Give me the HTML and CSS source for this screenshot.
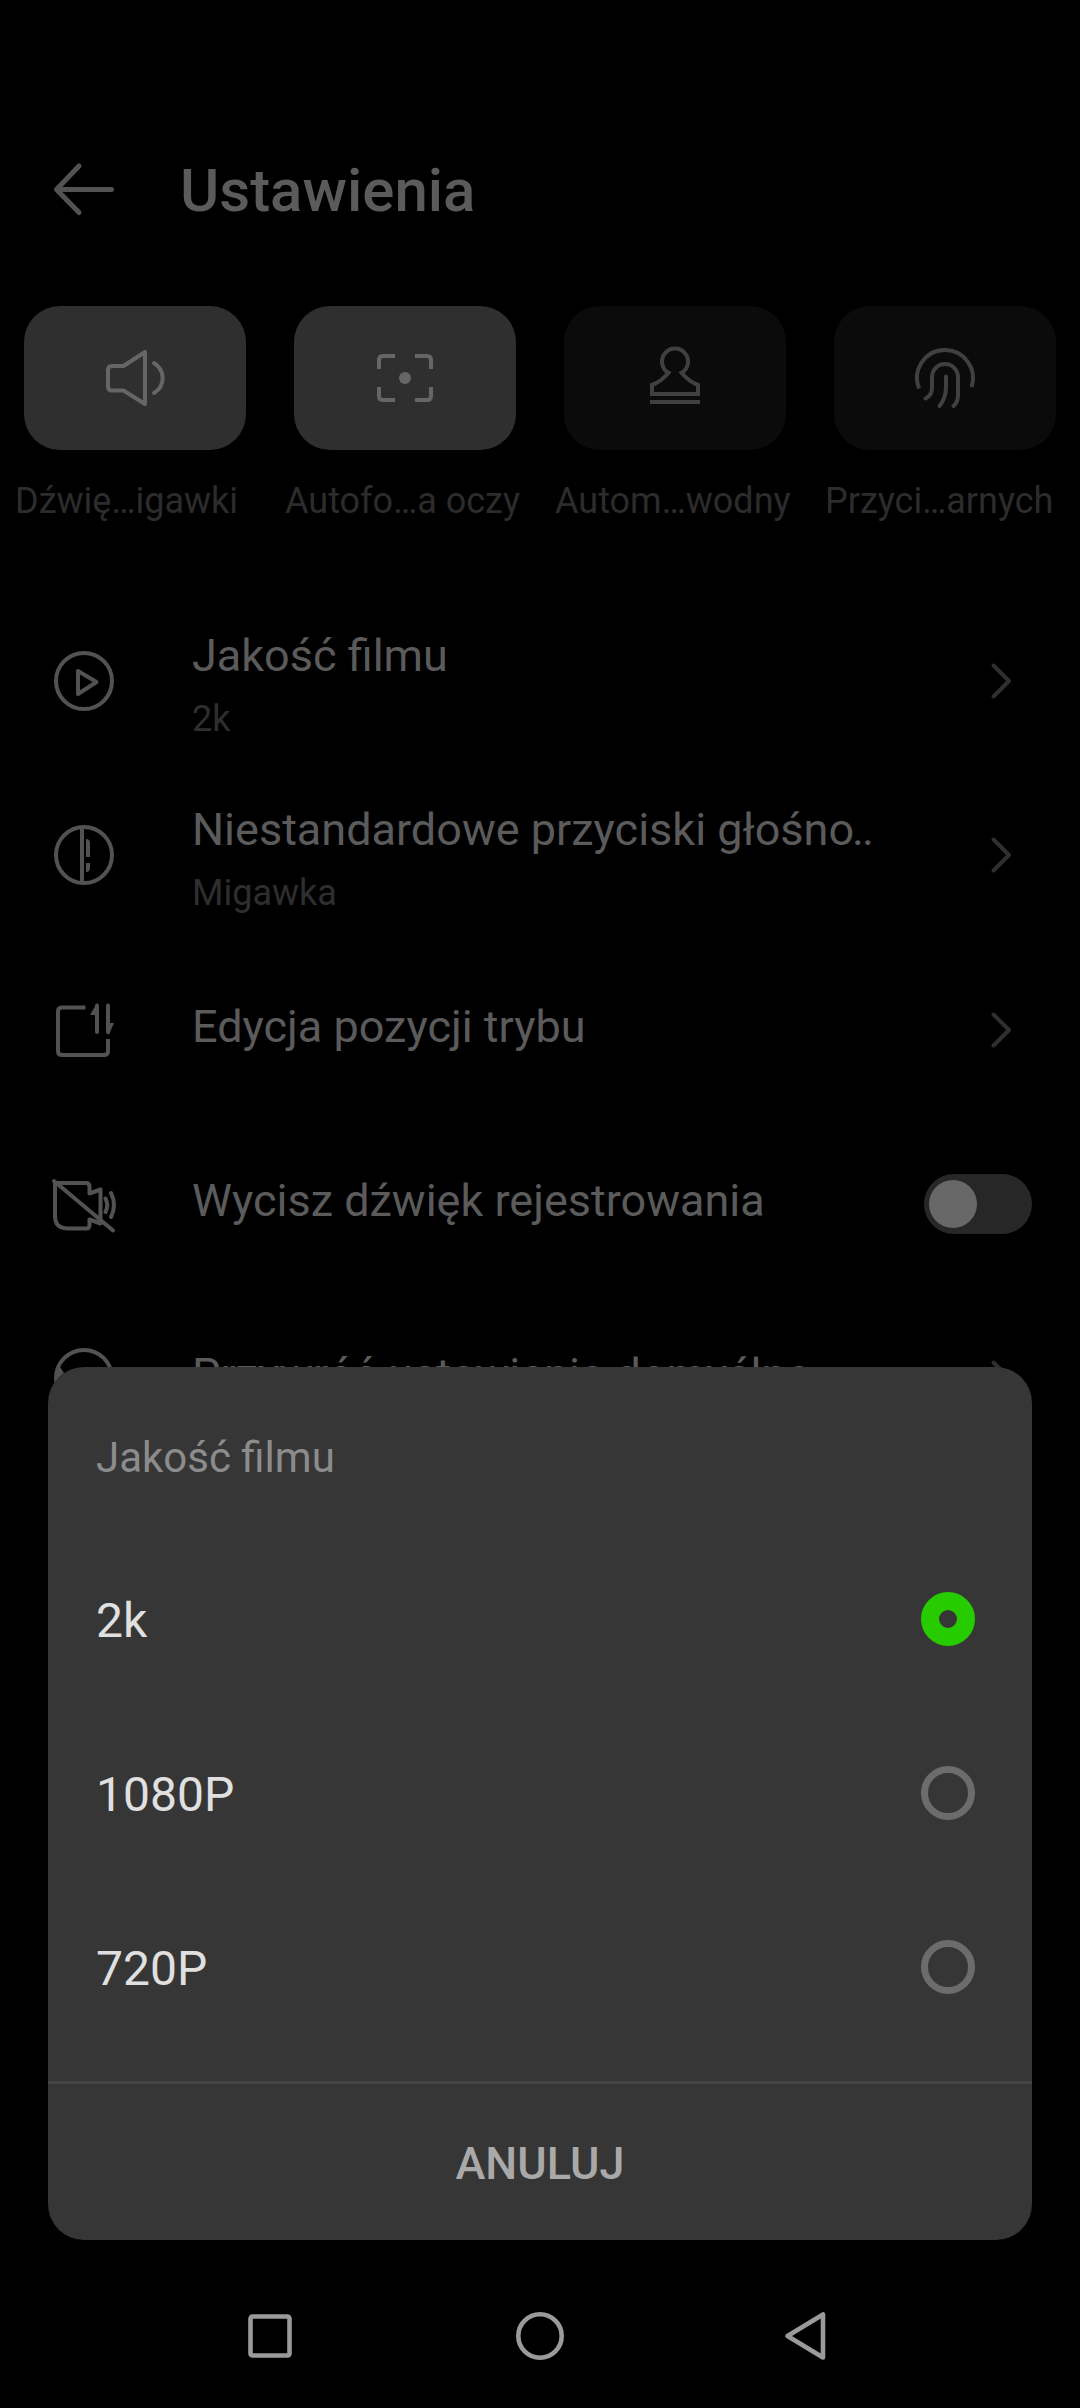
FILE: index.html
```html
<!DOCTYPE html>
<html lang="pl">
<head>
<meta charset="utf-8">
<title>Ustawienia</title>
<link rel="stylesheet" href="styles.css">
</head>
<body>
<main class="screen">
  <header class="topbar">
    <svg class="icon back" viewBox="0 0 60 60"><path d="M57.500 29.500H3M25 6L2.500 29.500L25 52.500"/></svg>
    <h1 class="title">Ustawienia</h1>
  </header>

  <section class="tiles">
    <div class="tile">
      <div class="tile-face tile-on">
        <svg class="icon" viewBox="0 0 60 60"><path d="M40 4V56L18.500 42.500H7Q3 42.500 3 38.500V22Q3 18 7 18H18.500ZM49 15C60.500 22 60.500 38 49 45"/></svg>
      </div>
      <span class="tile-label">Dźwię…igawki</span>
    </div>
    <div class="tile">
      <div class="tile-face tile-on">
        <svg class="icon" viewBox="0 0 60 60"><path class="butt" d="M4 21V12Q4 8 8 8H20M40 8H52Q56 8 56 12V21M56 39V48Q56 52 52 52H40M20 52H8Q4 52 4 48V39"/><circle class="solid" cx="30" cy="30" r="6"/></svg>
      </div>
      <span class="tile-label">Autofo…a oczy</span>
    </div>
    <div class="tile">
      <div class="tile-face">
        <svg class="icon" viewBox="0 0 60 60"><path class="butt" d="M7 46V37C14 34.500 20 29 23.500 24.800A13 13 0 1 1 36.500 24.800C40 29 46 34.500 53 37V46ZM5 54H55"/></svg>
      </div>
      <span class="tile-label">Autom…wodny</span>
    </div>
    <div class="tile">
      <div class="tile-face">
        <svg class="icon" viewBox="0 0 60 60"><path class="butt" d="M4 40.500A28 28 0 1 1 56.500 39"/><path d="M10.500 50.500Q17 47.500 17 40V29A13 13 0 0 1 43 29V47Q43 54 38.500 58M31 28.500V39Q31 50 24.500 58"/></svg>
      </div>
      <span class="tile-label">Przyci…arnych</span>
    </div>
  </section>

  <section class="list">
    <div class="row">
      <svg class="icon" viewBox="0 0 60 60"><circle cx="30" cy="30" r="28"/><path d="M24 20V43L42.500 31Z"/></svg>
      <div class="row-text two-line"><span class="row-title">Jakość filmu</span><span class="row-sub">2k</span></div>
      <svg class="chevron" viewBox="0 0 20 36"><path d="M2.500 2.500L18 18L2.500 33.500"/></svg>
    </div>
    <div class="row">
      <svg class="icon" viewBox="0 0 60 60"><circle cx="30" cy="30" r="28"/><path class="butt" d="M28 2V58"/><path class="solid" d="M32 14Q36 14 36 18V32H32ZM32 38H36V43Q36 47 32 47Z"/></svg>
      <div class="row-text two-line"><span class="row-title">Niestandardowe przyciski głośn<span class="tight">o..</span></span><span class="row-sub">Migawka</span></div>
      <svg class="chevron" viewBox="0 0 20 36"><path d="M2.500 2.500L18 18L2.500 33.500"/></svg>
    </div>
    <div class="row">
      <svg class="icon" viewBox="0 0 60 60"><path class="butt" d="M31.500 8.500H8Q4 8.500 4 12.500V52Q4 56 8 56H50Q54 56 54 52V40"/><path d="M43 6.500V33M54 6.500V33"/><path class="solid" d="M43 4L36.500 15V16H43ZM54 24H60L55 35.500H54Z"/></svg>
      <div class="row-text"><span class="row-title">Edycja pozycji trybu</span></div>
      <svg class="chevron low" viewBox="0 0 20 36"><path d="M2.500 2.500L18 18L2.500 33.500"/></svg>
    </div>
    <div class="row">
      <svg class="icon" viewBox="0 0 60 60"><path d="M1 10H32Q35.500 10 35.500 13.500V20.500L46.500 16.500V50.500L35.500 46.500V52Q35.500 55.500 32 55.500H14Q1 55.500 1 43ZM0 8L59 57.500M51.500 25.500Q55 32 51.500 39M57 20Q63 32 57 44"/></svg>
      <div class="row-text"><span class="row-title">Wycisz dźwięk rejestrowania</span></div>
      <span class="toggle"><span class="knob"></span></span>
    </div>
    <div class="row">
      <svg class="icon" viewBox="0 0 60 60"><circle cx="30" cy="31" r="28"/><path class="solid" d="M4 17L10 26L1 34Z"/></svg>
      <div class="row-text"><span class="row-title">Przywróć ustawienia domyślne</span></div>
      <svg class="chevron low" viewBox="0 0 20 36"><path d="M2.500 2.500L18 18L2.500 33.500"/></svg>
    </div>
  </section>

  <section class="sheet" role="dialog">
    <h2 class="sheet-title">Jakość filmu</h2>
    <div class="option"><span class="option-name">2k</span><span class="radio checked"></span></div>
    <div class="option"><span class="option-name">1080P</span><span class="radio"></span></div>
    <div class="option"><span class="option-name">720P</span><span class="radio"></span></div>
    <div class="cancel">ANULUJ</div>
  </section>

  <nav class="navbar">
    <svg viewBox="0 0 60 60"><rect x="10.500" y="10.500" width="39" height="39" rx="2"/></svg>
    <svg viewBox="0 0 60 60"><circle cx="30" cy="30" r="21.700"/></svg>
    <svg viewBox="0 0 60 60"><path d="M43 8.500V51.500L7.500 30Z"/></svg>
  </nav>
</main>
</body>
</html>
```
FILE: styles.css
```css
* { box-sizing: border-box; }

body {
  margin: 0;
  background: #000;
  font-family: Roboto, sans-serif;
}

.screen {
  position: relative;
  width: 1080px;
  height: 2408px;
  overflow: hidden;
  background: #000;
}

svg {
  display: block;
  flex: none;
  overflow: visible;
  fill: none;
  stroke-linecap: round;
  stroke-linejoin: round;
}

.icon { width: 60px; height: 60px; stroke: #525252; stroke-width: 4; }
.butt { stroke-linecap: butt; stroke-linejoin: miter; }
.solid { stroke: none; fill: #525252; }

.topbar {
  display: flex;
  align-items: center;
  gap: 66px;
  height: 306px;
  padding: 74px 54px 0;
}
.back { stroke-width: 5; }
.title {
  margin: 0;
  padding-top: 2px;
  color: #5b5b5b;
  font-size: 60px;
  font-weight: 500;
  line-height: 72px;
}

.tiles { display: grid; grid-template-columns: repeat(4, 270px); }
.tile-face {
  display: grid;
  place-items: center;
  width: 222px;
  height: 144px;
  margin-left: 24px;
  border-radius: 36px;
  background: #0b0b0b;
}
.tile-face .icon { stroke: #404040; }
.tile-on { background: #2f2f2f; }
.tile-face.tile-on .icon { stroke: #666; }
.tile-face .icon .solid { stroke: none; fill: #666; }
.tile-label {
  display: block;
  margin-top: 30px;
  padding-left: 15px;
  color: #2c2c2c;
  font-size: 36px;
  line-height: 42px;
  white-space: nowrap;
}

.list { padding-top: 72px; }
.row {
  display: flex;
  align-items: center;
  height: 174px;
  padding: 0 48px 0 54px;
}
.row-text {
  display: flex;
  flex: 1;
  flex-direction: column;
  gap: 16px;
  margin: -6px 0 0 78px;
  white-space: nowrap;
}
.two-line { margin-top: 6px; }
.row-title { color: #5b5b5b; font-size: 45px; line-height: 53px; }
.row-sub { color: #2e2e2e; font-size: 36px; line-height: 42px; }
.tight { letter-spacing: -2px; }
.chevron { width: 20px; height: 36px; margin-right: 21px; stroke: #2f2f2f; stroke-width: 4; }
.low { margin-top: 2px; }

.toggle {
  width: 108px;
  height: 60px;
  margin-top: 2px;
  padding: 6px 5px;
  border-radius: 30px;
  background: #272727;
}
.knob { display: block; width: 48px; height: 48px; border-radius: 50%; background: #686868; }

.sheet {
  position: absolute;
  top: 1367px;
  left: 48px;
  width: 984px;
  height: 873px;
  border-radius: 36px;
  background: #363636;
}
.sheet-title {
  height: 165px;
  margin: 0;
  padding: 66px 48px 0;
  color: #8c8c8c;
  font-size: 42px;
  font-weight: 400;
  line-height: 50px;
}
.option {
  display: flex;
  align-items: center;
  justify-content: space-between;
  height: 174px;
  padding: 0 57px 0 48px;
  color: #e0e0e0;
  font-size: 48px;
}
.option-name { padding-top: 2px; }
.radio { width: 54px; height: 54px; border: 7px solid #6c6c6c; border-radius: 50%; }
.checked { border: 18px solid #26cc00; }
.cancel {
  display: grid;
  place-items: center;
  height: 159px;
  margin-top: 27px;
  padding-top: 2px;
  border-top: 3px solid #454545;
  color: #a9a9a9;
  font-size: 45px;
  font-weight: 500;
}

.navbar {
  position: absolute;
  right: 0;
  bottom: 0;
  left: 0;
  display: flex;
  justify-content: space-between;
  height: 144px;
  padding: 42px 240px;
}
.navbar svg { width: 60px; height: 60px; stroke: #9a9a9a; stroke-width: 4.600; }
```
